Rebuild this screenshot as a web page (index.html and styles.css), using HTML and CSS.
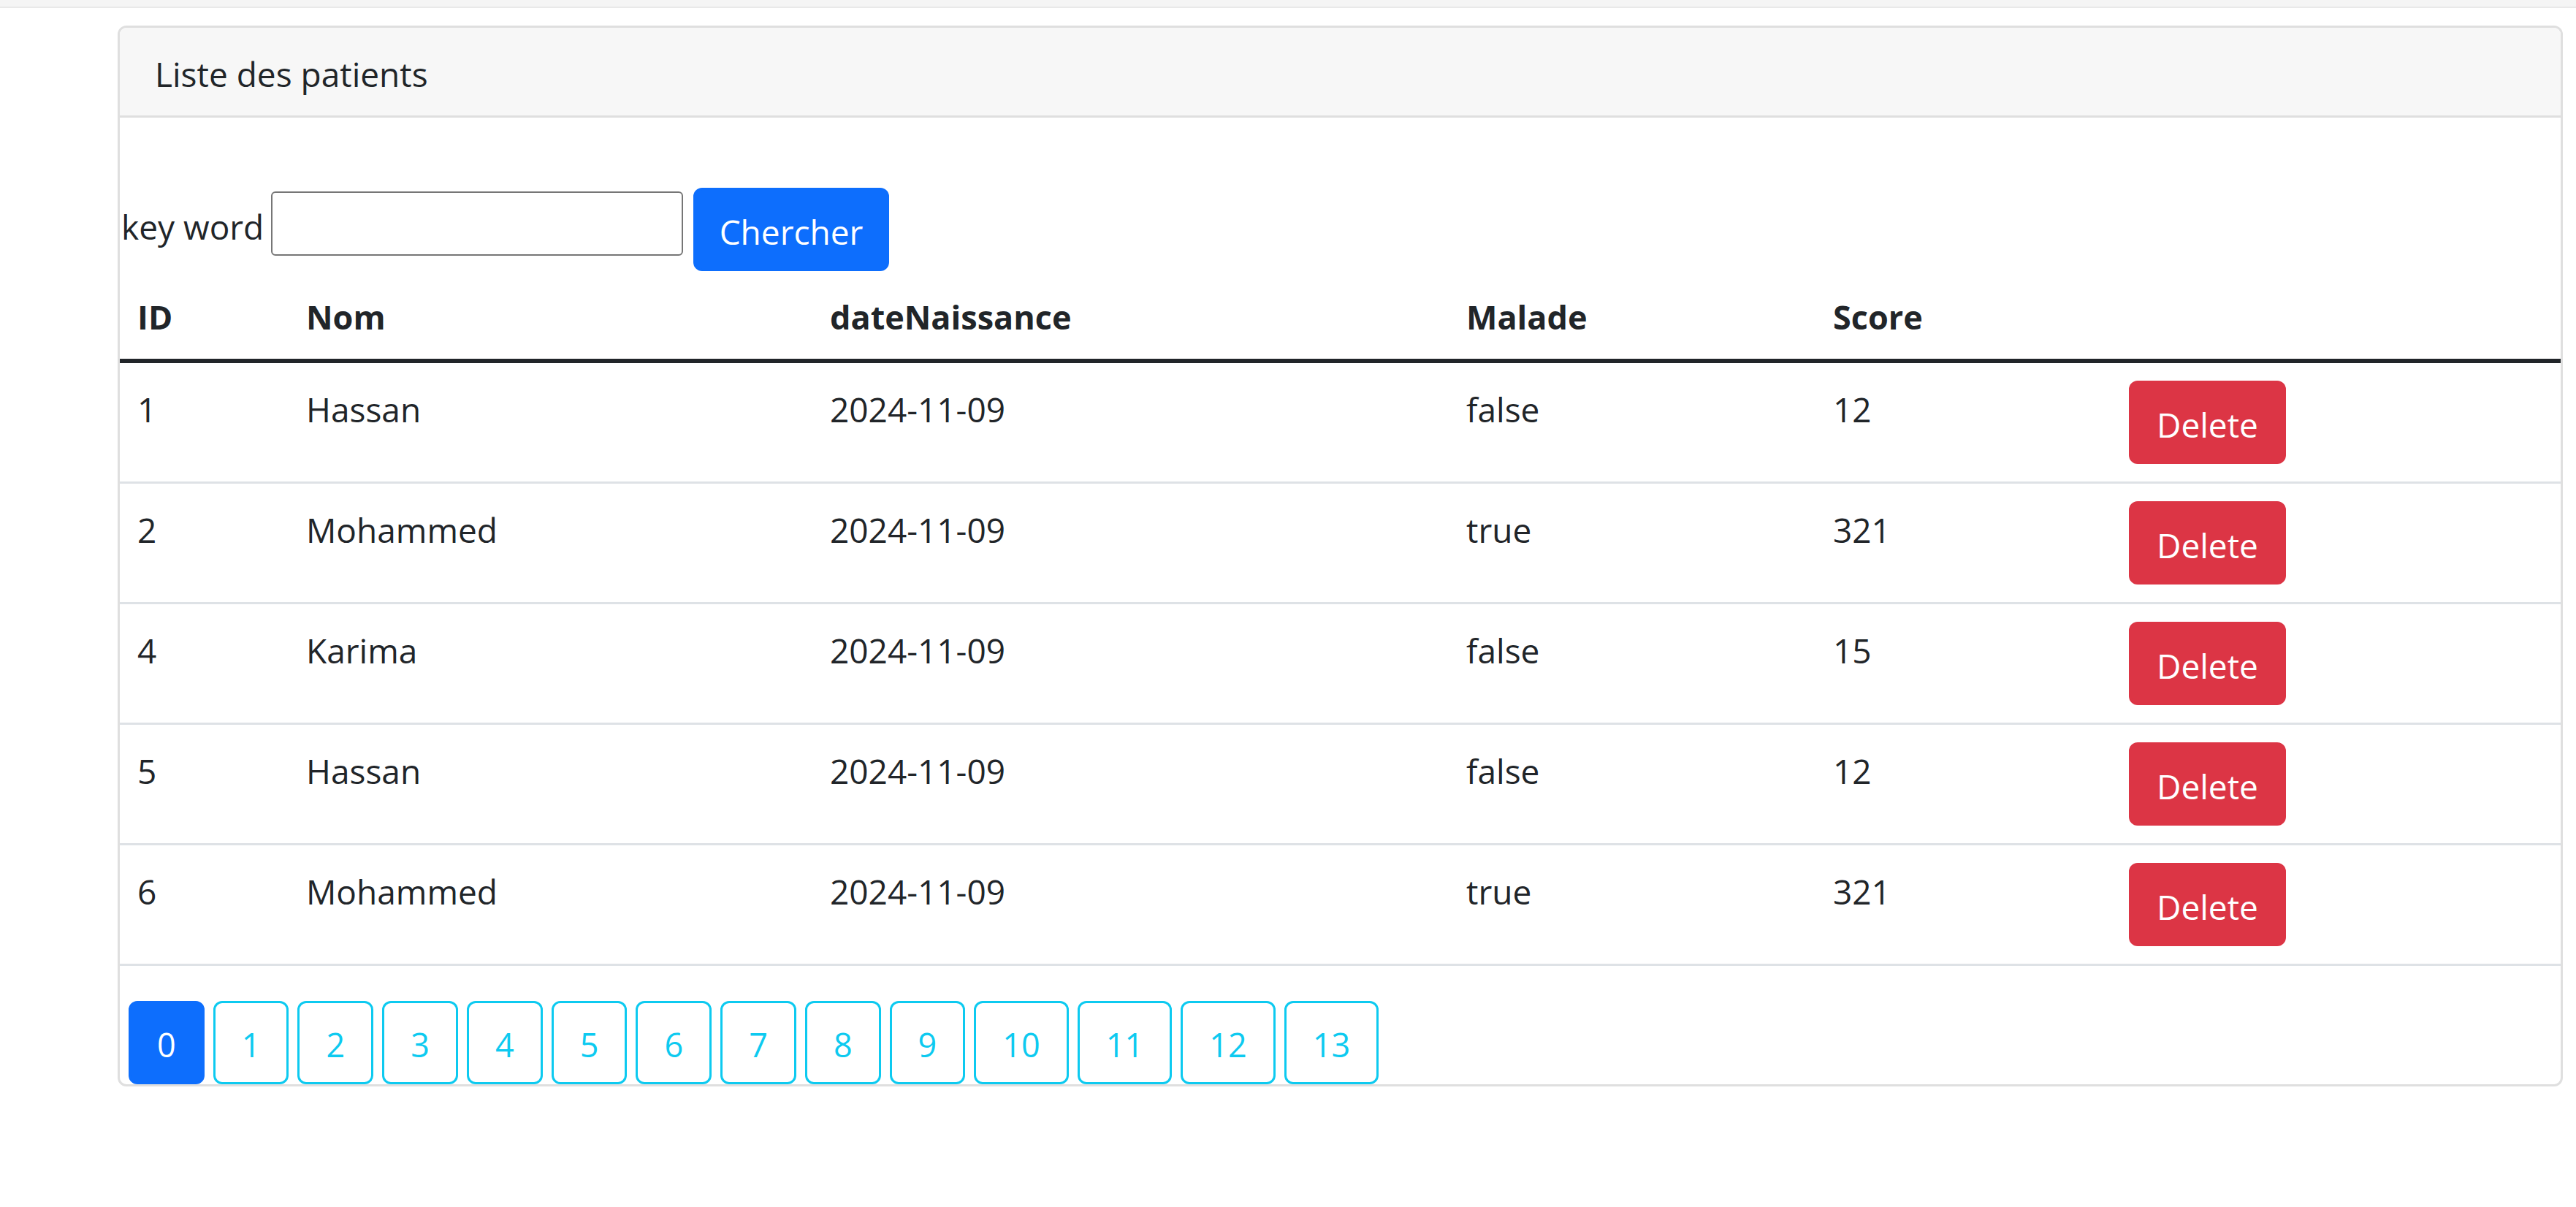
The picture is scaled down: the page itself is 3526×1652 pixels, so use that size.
FILE: index.html
```html
<!DOCTYPE html>
<html lang="fr">
<head>
<meta charset="utf-8">
<title>Liste des patients</title>
<link rel="stylesheet" href="styles.css">
</head>
<body>
<div class="topbar"></div>
<div class="page">
  <div class="card">
    <div class="card-header">Liste des patients</div>
    <div class="card-body">
      <form class="search">
        <label class="search-label" for="kw">key word</label>
        <input class="search-input" id="kw" type="text">
        <button class="btn btn-primary search-btn" type="button">Chercher</button>
      </form>
      <table class="table">
        <thead>
          <tr>
            <th class="col-id">ID</th>
            <th class="col-nom">Nom</th>
            <th class="col-date">dateNaissance</th>
            <th class="col-malade">Malade</th>
            <th class="col-score">Score</th>
            <th class="col-action"></th>
          </tr>
        </thead>
        <tbody>
          <tr><td>1</td><td>Hassan</td><td>2024-11-09</td><td>false</td><td>12</td><td><button class="btn btn-danger" type="button">Delete</button></td></tr>
          <tr><td>2</td><td>Mohammed</td><td>2024-11-09</td><td>true</td><td>321</td><td><button class="btn btn-danger" type="button">Delete</button></td></tr>
          <tr><td>4</td><td>Karima</td><td>2024-11-09</td><td>false</td><td>15</td><td><button class="btn btn-danger" type="button">Delete</button></td></tr>
          <tr><td>5</td><td>Hassan</td><td>2024-11-09</td><td>false</td><td>12</td><td><button class="btn btn-danger" type="button">Delete</button></td></tr>
          <tr><td>6</td><td>Mohammed</td><td>2024-11-09</td><td>true</td><td>321</td><td><button class="btn btn-danger" type="button">Delete</button></td></tr>
        </tbody>
      </table>
      <ul class="pages">
        <li><a class="page-btn active" href="#">0</a></li>
        <li><a class="page-btn" href="#">1</a></li>
        <li><a class="page-btn" href="#">2</a></li>
        <li><a class="page-btn" href="#">3</a></li>
        <li><a class="page-btn" href="#">4</a></li>
        <li><a class="page-btn" href="#">5</a></li>
        <li><a class="page-btn" href="#">6</a></li>
        <li><a class="page-btn" href="#">7</a></li>
        <li><a class="page-btn" href="#">8</a></li>
        <li><a class="page-btn" href="#">9</a></li>
        <li><a class="page-btn" href="#">10</a></li>
        <li><a class="page-btn" href="#">11</a></li>
        <li><a class="page-btn" href="#">12</a></li>
        <li><a class="page-btn" href="#">13</a></li>
      </ul>
    </div>
  </div>
</div>
</body>
</html>
```
FILE: styles.css
```css
*, *::before, *::after { box-sizing: border-box; }

html, body {
  margin: 0;
  padding: 0;
  background: #ffffff;
}

body {
  font-family: "Open Sans", "Noto Sans", "Liberation Sans", sans-serif;
  font-size: 46px;
  line-height: 72px;
  color: #212529;
}

.topbar {
  height: 11px;
  background: #f5f5f5;
  border-bottom: 2px solid #e9e9e9;
}

.page {
  padding: 24px 18px 0 161px;
}

.card {
  border: 3px solid #dfdfdf;
  border-radius: 12px;
  background: #ffffff;
}

.card-header {
  background: #f7f7f7;
  padding: 27px 48px 21px 48px;
  border-bottom: 3px solid #dfdfdf;
  border-radius: 9px 9px 0 0;
}

.card-body {
  padding: 96px 0 0 0;
}

.search {
  display: flex;
  align-items: flex-start;
  margin: 0;
}

.search-label {
  width: 207px;
  margin-top: 17px;
  padding-left: 2px;
}

.search-input {
  width: 564px;
  height: 88px;
  margin: 5px 0 0 0;
  border: 2px solid #767676;
  border-radius: 6px;
  font: inherit;
  padding: 0 6px;
  background: #ffffff;
}

.btn {
  display: inline-block;
  font: inherit;
  font-size: 46px;
  line-height: 72px;
  padding: 21px 36px 15px 36px;
  border: 3px solid transparent;
  border-radius: 12px;
  color: #ffffff;
  cursor: pointer;
  text-align: center;
}

.btn-primary {
  background: #0d6efd;
  border-color: #0d6efd;
}

.btn-danger {
  background: #dc3545;
  border-color: #dc3545;
  width: 215px;
  padding-left: 0;
  padding-right: 0;
}

.search-btn {
  width: 268px;
  height: 114px;
  margin-left: 14px;
  padding-left: 0;
  padding-right: 0;
}

.table {
  width: 100%;
  table-layout: fixed;
  border-collapse: collapse;
  margin: 0 0 48px 0;
}

.table th,
.table td {
  padding: 27px 24px 21px 24px;
  text-align: left;
  white-space: nowrap;
}

.table th {
  font-weight: 700;
  font-size: 45px;
  vertical-align: bottom;
  border-bottom: 6px solid #212529;
}

.table td {
  vertical-align: top;
  border-bottom: 3px solid #dee2e6;
}

.table td:last-child {
  padding-top: 24px;
  padding-bottom: 24px;
}

.col-id { width: 231px; }
.col-nom { width: 717px; }
.col-date { width: 871px; }
.col-malade { width: 502px; }
.col-score { width: 405px; }
.col-action { width: 615px; }

.pages {
  display: flex;
  list-style: none;
  margin: 0;
  padding: 0;
}

.pages li {
  margin-left: 12px;
}

.page-btn {
  display: block;
  font-size: 45px;
  padding: 21px 36px 15px 36px;
  border: 3px solid #0dcaf0;
  border-radius: 12px;
  color: #0dcaf0;
  text-decoration: none;
  background: #ffffff;
}

.page-btn.active {
  background: #0d6efd;
  border-color: #0d6efd;
  color: #ffffff;
}
```
